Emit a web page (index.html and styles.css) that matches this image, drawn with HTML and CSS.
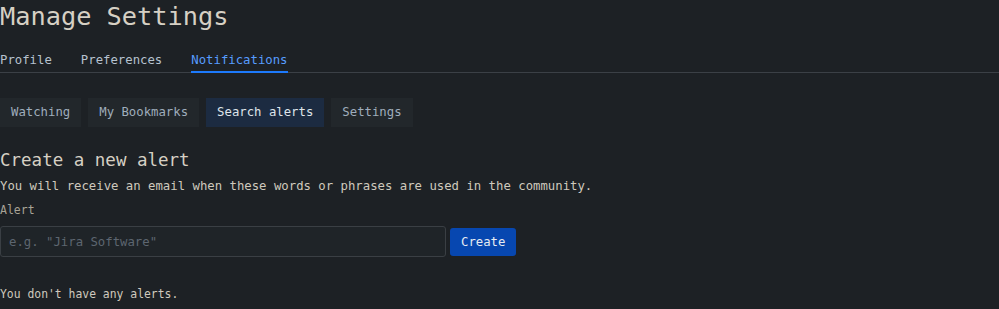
FILE: index.html
```html
<!DOCTYPE html>
<html>
<head>
<meta charset="utf-8">
<link rel="stylesheet" href="styles.css">
</head>
<body>
<div class="page">
  <h1 class="title">Manage Settings</h1>
  <nav class="tabs">
    <a class="tab">Profile</a>
    <a class="tab">Preferences</a>
    <a class="tab active">Notifications</a>
  </nav>
  <div class="subtabs">
    <span class="subtab">Watching</span>
    <span class="subtab">My Bookmarks</span>
    <span class="subtab active">Search alerts</span>
    <span class="subtab">Settings</span>
  </div>
  <h2 class="section-title">Create a new alert</h2>
  <p class="desc">You will receive an email when these words or phrases are used in the community.</p>
  <label class="label">Alert</label>
  <div class="form-row">
    <input class="input" type="text" placeholder="e.g. &quot;Jira Software&quot;">
    <button class="btn">Create</button>
  </div>
  <p class="empty">You don't have any alerts.</p>
</div>
</body>
</html>
```

FILE: styles.css
```css
html, body {
  margin: 0;
  padding: 0;
  background: #1d2125;
}
body {
  font-family: "DejaVu Sans Mono", monospace;
  color: #b6c2cf;
}
.page {
  display: flex;
  flex-direction: column;
  align-items: flex-start;
}
.title {
  margin: 0;
  padding-top: 2px;
  font-size: 25.3px;
  font-weight: normal;
  line-height: 30px;
  color: #d6d0c4;
}
.tabs {
  align-self: stretch;
  display: flex;
  gap: 29px;
  margin-top: 20px;
  border-bottom: 1px solid #3b4046;
}
.tab {
  font-size: 12.3px;
  line-height: 16px;
  padding-bottom: 3px;
  color: #b6c2cf;
  border-bottom: 2px solid transparent;
  margin-bottom: -1px;
}
.tab.active {
  color: #579dff;
  border-bottom-color: #1d7afc;
}
.subtabs {
  display: flex;
  gap: 7px;
  margin-top: 25px;
}
.subtab {
  font-size: 12.3px;
  line-height: 16px;
  padding: 6px 11px 7px;
  background: #22272b;
  color: #9fadbc;
}
.subtab.active {
  background: #1c2b41;
  color: #dee4ea;
}
.section-title {
  margin: 22px 0 0;
  font-size: 17.5px;
  font-weight: normal;
  line-height: 22px;
  color: #d6d0c4;
}
.desc {
  margin: 7px 0 0;
  font-size: 12.3px;
  line-height: 16px;
  color: #cfc9bd;
}
.label {
  margin-top: 9px;
  font-size: 11.5px;
  line-height: 14px;
  color: #a8a296;
}
.form-row {
  display: flex;
  align-items: center;
  gap: 4px;
  margin-top: 9px;
}
.input {
  box-sizing: border-box;
  width: 446px;
  height: 31px;
  margin: 0;
  padding: 0 8px;
  background: #1f2428;
  border: 1px solid #3a3f44;
  border-radius: 3px;
  font-family: "DejaVu Sans Mono", monospace;
  font-size: 12.3px;
  color: #b6c2cf;
  outline: none;
}
.input::placeholder {
  color: #5d6670;
}
.btn {
  box-sizing: border-box;
  height: 28px;
  padding: 0 11px;
  border: none;
  border-radius: 3px;
  background: #0747b0;
  color: #e6ecf2;
  font-family: "DejaVu Sans Mono", monospace;
  font-size: 12.3px;
}
.empty {
  margin: 30px 0 0;
  font-size: 11.4px;
  line-height: 14px;
  color: #cfc9bd;
}
```
